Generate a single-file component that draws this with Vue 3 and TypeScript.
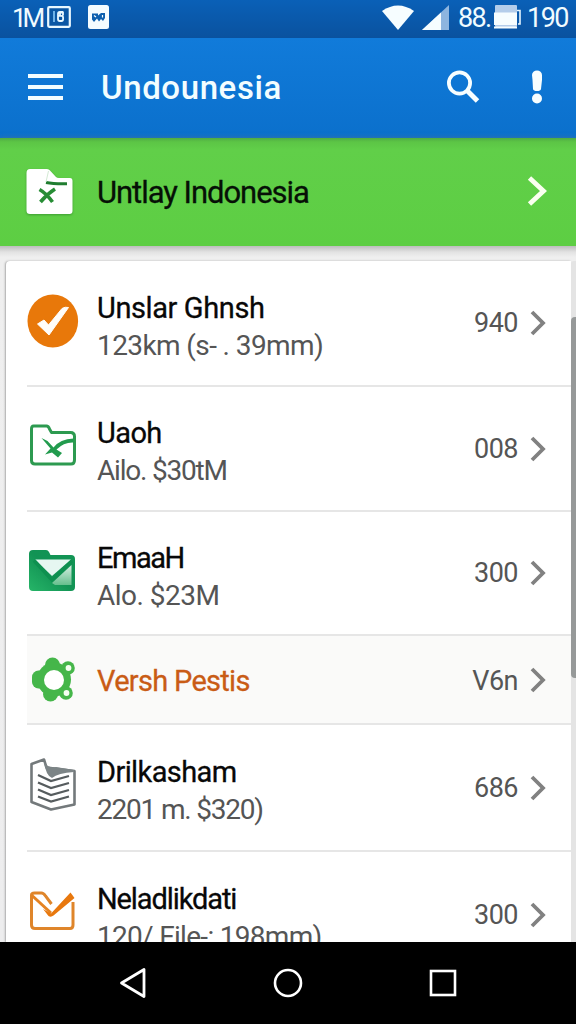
<script setup lang="ts">
interface Row {
  icon: 'check' | 'folder' | 'mail' | 'flower' | 'document' | 'envelope'
  title: string
  titleSpacing: number
  sub?: string
  subSpacing?: number
  value: string
  size: string
}

const rows: Row[] = [
  { icon: 'check', title: 'Unslar Ghnsh', titleSpacing: -0.4, sub: '123km (s- . 39mm)', subSpacing: -0.6, value: '940', size: 'first' },
  { icon: 'folder', title: 'Uaoh', titleSpacing: -0.6, sub: 'Ailo. $30tM', subSpacing: -1.2, value: '008', size: 'regular' },
  { icon: 'mail', title: 'EmaaH', titleSpacing: -1.5, sub: 'Alo. $23M', subSpacing: -0.5, value: '300', size: 'compact' },
  { icon: 'flower', title: 'Versh Pestis', titleSpacing: -0.7, value: 'V6n', size: 'active' },
  { icon: 'document', title: 'Drilkasham', titleSpacing: -0.6, sub: '2201 m. $320)', subSpacing: -1.2, value: '686', size: 'tall' },
  { icon: 'envelope', title: 'Neladlikdati', titleSpacing: -1.1, sub: '120/ File-: 198mm)', subSpacing: -0.7, value: '300', size: 'tall' },
]
</script>

<template>
  <div class="screen">
    <header class="status">
      <div class="status-left">
        <span class="carrier">1M</span>
        <svg class="window-icon" width="24" height="22" viewBox="0 0 24 22">
          <rect x="1.2" y="1.2" width="21.6" height="19.6" rx="1" fill="#0b57a4" stroke="#e9f8ff" stroke-width="2.2" />
          <path d="M7 5v11" stroke="#79bdf0" stroke-width="1.8" />
          <path d="M16 6h-3.200q-1.800 0-1.800 2v5q0 2 1.800 2h1.600q1.700 0 1.700-2v-1.300q0-1.800-1.700-1.800h-3M13 10V6.500h3v3" fill="none" stroke="#e9f8ff" stroke-width="1.800" />
        </svg>
        <svg class="app-icon" width="21" height="24" viewBox="0 0 21 24">
          <rect width="21" height="24" rx="2.5" fill="#f4fcff" />
          <path d="M4 8.500h6v2l3-2.500h4v5l-2 3-2-2-2 2.500-2-3-3 3.500-2-2.500z" fill="#0c5fae" />
          <path d="M6 10.500l2 1.500M14.500 10v2.500" stroke="#f4fcff" stroke-width="1.200" />
        </svg>
      </div>
      <div class="status-right">
        <svg width="32" height="25" viewBox="0 0 32 25"><path d="M0 6Q16-5 32 6L16 25z" fill="#f6fdff" /></svg>
        <svg class="signal" width="27" height="25" viewBox="0 0 27 25">
          <path d="M0 25L27 0v25z" fill="#8db5df" /><path d="M0 25L19 7.500V25z" fill="#f6fdff" />
        </svg>
        <span class="percent">88.</span>
        <svg class="battery" width="28" height="24" viewBox="0 0 28 24">
          <rect x="1" width="22" height="22" rx="1" fill="#b4cdea" />
          <path d="M0 7.500h23V20H0zM0 21.500h23v2H0z" fill="#f6fdff" />
          <path d="M23 5.500h3V19h-2" fill="none" stroke="#e4f5ff" stroke-width="1.600" />
        </svg>
        <span class="clock">190</span>
      </div>
    </header>

    <div class="appbar">
      <svg class="menu" width="35" height="26" viewBox="0 0 35 26"><path d="M0 2h35M0 13h35M0 24h35" stroke="#f3fdff" stroke-width="4" /></svg>
      <h1>Undounesia</h1>
      <svg class="search" width="34" height="34" viewBox="0 0 34 34">
        <circle cx="13.500" cy="13" r="10.600" fill="none" stroke="#f8feff" stroke-width="3.800" />
        <path d="M21 20.500L31.500 31" stroke="#f8feff" stroke-width="5" />
      </svg>
      <svg class="alert" width="12" height="34" viewBox="0 0 12 34">
        <path d="M1 5a5 4.500 0 0 1 10 0v5L10 19q-.5 2-4 2t-4-2L1.500 10z" fill="#f8feff" />
        <ellipse cx="6" cy="28.500" rx="5" ry="5" fill="#f8feff" />
      </svg>
    </div>

    <div class="banner">
      <svg class="banner-icon" width="47" height="46" viewBox="0 0 47 46">
        <path d="M4 0h17q2 0 3 1.500L30 8q1 1 3 1h11q2.500 0 2.500 3v30q0 3-3 3H4q-3.500 0-3.500-3.500V4Q.5 0 4 0z" fill="#fff" />
        <path d="M13.500 20.500q7 4 13 12.500M29 20q-8 5-14.500 13" fill="none" stroke="#278d35" stroke-width="3.600" />
        <path d="M20 13.500q8 1.500 21 1.200" fill="none" stroke="#207d30" stroke-width="3" /><path d="M22.500 2L20 13" stroke="#d3ead4" stroke-width="1" />
      </svg>
      <span class="banner-text">Untlay Indonesia</span>
      <svg class="banner-arrow" width="20" height="30" viewBox="0 0 20 30"><path d="M2.500 2L16.500 15 2.500 28" fill="none" stroke="#fafff0" stroke-width="4.800" /></svg>
    </div>

    <main class="content">
      <div class="card">
        <div v-for="row in rows" :key="row.title" class="row" :class="row.size">
          <div class="icon">
            <svg v-if="row.icon === 'check'" width="52" height="54" viewBox="0 0 52 54">
              <ellipse cx="25.800" cy="27" rx="25.300" ry="26.500" fill="#e8780a" />
              <path d="M10.500 30l6.500-4 4.500 5L35 14.500q3-2 6.500-1L22 41z" fill="#fffdfa" stroke="#fffdfa" />
            </svg>
            <svg v-else-if="row.icon === 'folder'" width="52" height="54" viewBox="0 0 52 54">
              <path d="M6.500 7h13q2 0 3 3l2 3.500h19q4 0 4 4V41q0 4-3.500 4H8q-3.500 0-3.500-3.500V10q0-3 2-3z" fill="#fff" stroke="#2d9a50" stroke-width="3" stroke-linejoin="round" />
              <path d="M14.500 19l6 3 6 6.500Q33 20 46.500 19.500v4Q37 23 29.500 30.500l5.500 3.500-4 4.500-6-5-7 2 5.500-6z" fill="#229b4e" />
            </svg>
            <svg v-else-if="row.icon === 'mail'" width="52" height="54" viewBox="0 0 52 54">
              <defs>
                <linearGradient id="fold" x1="0" y1="1" x2="1" y2="0"><stop offset="0" stop-color="#26b568" /><stop offset=".5" stop-color="#129354" /><stop offset="1" stop-color="#129555" /></linearGradient>
                <linearGradient id="flap" x1="0" y1="0" x2="0" y2="1"><stop offset="0" stop-color="#d8efe4" /><stop offset="1" stop-color="#66bf8d" /></linearGradient>
              </defs>
              <path d="M6 6h13q2 0 3 2l1.500 3H44q4 0 4 4v28q0 4-4 4H6q-4 0-4-4V10q0-4 4-4z" fill="url(#fold)" />
              <path d="M8 15.500h36L25 32z" fill="#e6f7f1" /><path d="M25 39L44.500 21v20H28z" fill="url(#flap)" />
              <path d="M7 16.500L25 36 45 17" fill="none" stroke="#0e9050" stroke-width="3.500" />
            </svg>
            <svg v-else-if="row.icon === 'flower'" width="52" height="54" viewBox="0 0 52 54">
              <g fill="#45b64a"><circle cx="25.500" cy="12" r="7.500" /><rect x="5" y="17.500" width="15" height="18" rx="6.500" /><circle cx="23.500" cy="41" r="7.500" /><circle cx="27" cy="26.500" r="17" /><circle cx="41" cy="15" r="6.800" /><circle cx="39" cy="40" r="6.800" /></g>
              <circle cx="27" cy="27" r="10" fill="#fff" /><circle cx="41.500" cy="15" r="2.900" fill="#f4fff1" /><circle cx="39.500" cy="40" r="2.900" fill="#f4fff1" />
            </svg>
            <svg v-else-if="row.icon === 'document'" width="52" height="54" viewBox="0 0 52 54">
              <path d="M4.500 6L17 1.500l2.500 8 28 3.500v33.500L24 51.500 4.500 44z" fill="#fff" stroke="#73797b" stroke-width="2.600" stroke-linejoin="round" />
              <path d="M17 4q4 6.500 12 5l18 3v2q-16 1-22 6-6-2-8-16z" fill="#7c8486" />
              <path d="M11 17l13 6 18-5M11 24.500l13 5.500 18-5M11 31.500l13 5.500 18-5M11 38.500l13 5 18-5" fill="none" stroke="#565c5e" stroke-width="2.300" />
            </svg>
            <svg v-else width="52" height="54" viewBox="0 0 52 54">
              <path d="M4.500 10q0-2 3-2h7q2 0 4 3l6 8M46 17v23q0 3.500-3 3.500H8q-3.500 0-3.500-3.500V10" fill="none" stroke="#df852a" stroke-width="3" />
              <path d="M5 10.500L24 28" fill="none" stroke="#e58322" stroke-width="3" />
              <path d="M16 24l8 4.500L43.500 7.500l4 5.500-21 17.500q-2.500 2-5 .5z" fill="#e8780e" />
            </svg>
          </div>
          <div class="copy">
            <div class="title" :style="{ letterSpacing: row.titleSpacing + 'px' }">{{ row.title }}</div>
            <div v-if="row.sub" class="sub" :style="{ letterSpacing: row.subSpacing + 'px' }">{{ row.sub }}</div>
          </div>
          <span class="value">{{ row.value }}</span>
          <svg class="arrow" width="16" height="26" viewBox="0 0 16 26"><path d="M2 2L13 13 2 24" fill="none" stroke="#818181" stroke-width="3.800" /></svg>
        </div>
      </div>
      <div class="track"><div class="thumb"></div></div>
    </main>

    <nav class="navbar">
      <svg width="28" height="32" viewBox="0 0 28 32"><path d="M25 2.500v27L2.500 16z" fill="none" stroke="#fff" stroke-width="2.800" stroke-linejoin="round" /></svg>
      <svg width="30" height="30" viewBox="0 0 30 30"><circle cx="15" cy="15" r="13" fill="none" stroke="#fff" stroke-width="2.600" /></svg>
      <svg width="28" height="28" viewBox="0 0 28 28"><rect x="2" y="2" width="24" height="24" fill="none" stroke="#fff" stroke-width="2.600" /></svg>
    </nav>
  </div>
</template>

<style>
body {
  margin: 0;
  overflow: hidden;
}
</style>

<style scoped>
.screen {
  width: 576px;
  height: 1024px;
  display: flex;
  flex-direction: column;
  overflow: hidden;
  background: #ededee;
  font-family: Roboto, "Liberation Sans", sans-serif;
}
svg {
  display: block;
  flex: none;
}
.status {
  height: 38px;
  flex: none;
  display: flex;
  justify-content: space-between;
  color: #f1fbff;
  background: linear-gradient(#0a60b7, #0a529f);
}
.status-left,
.status-right {
  display: flex;
  align-items: flex-start;
}
.carrier {
  width: 34px;
  margin-left: 12px;
  font-size: 26px;
  line-height: 37px;
  letter-spacing: -4px;
}
.window-icon {
  margin: 6px 0 0 1px;
}
.app-icon {
  margin: 5px 0 0 17px;
}
.status-right {
  padding-top: 5px;
}
.signal {
  margin-left: 8px;
}
.percent,
.clock {
  font-size: 27px;
  line-height: 38px;
  margin-top: -6px;
  white-space: nowrap;
}
.percent {
  width: 36px;
  margin-left: 9px;
  letter-spacing: -1.7px;
}
.clock {
  width: 49px;
  margin-left: 5px;
  letter-spacing: -1.5px;
}
.appbar {
  height: 100px;
  flex: none;
  display: flex;
  align-items: center;
  box-sizing: border-box;
  padding: 0 33px 3px 28px;
  background: linear-gradient(#117bda, #0b70cc);
}
.menu {
  margin-top: 1px;
}
h1 {
  margin: 2px auto 0 38px;
  color: #f3fdff;
  font-size: 33px;
  font-weight: 500;
  line-height: 40px;
  letter-spacing: 0.6px;
}
.search {
  margin-right: 51px;
}
.banner {
  height: 108px;
  flex: none;
  display: flex;
  align-items: center;
  box-sizing: border-box;
  padding: 0 29px 0 26px;
  background: linear-gradient(#4fab43 0, #5cc545 4px, #61cf49 12px, #5dce43 100%);
  box-shadow: 0 2px 6px #777;
}
.banner-icon {
  filter: drop-shadow(0 1px 1px #3d9c32);
}
.banner-text {
  margin: 2px auto 0 24px;
  font-size: 31px;
  line-height: 38px;
  letter-spacing: -1.05px;
  color: #061006;
  -webkit-text-stroke: 0.3px #061006;
}
.banner-arrow {
  margin-top: -2px;
}
.content {
  min-height: 0;
  flex: 1;
  display: flex;
  padding: 15px 0 0 6px;
  overflow: hidden;
  background: linear-gradient(#bdbdbd, #e2e2e2 6px, #efefef 11px, #ededee);
  z-index: 0;
}
.card {
  width: 565px;
  flex: none;
  border-radius: 4px 0 0;
  background: #fff;
  box-shadow: -1px 0 2px #aaa;
}
.row {
  display: flex;
  align-items: center;
  box-sizing: border-box;
  margin-left: 21px;
  border-bottom: 2px solid #e6e6e6;
}
.first {
  height: 126px;
}
.regular {
  height: 125px;
}
.compact {
  height: 124px;
}
.active {
  height: 89px;
  background: #fafaf9;
}
.tall {
  height: 127px;
}
.icon {
  width: 52px;
  margin-top: -5px;
}
.active .icon {
  margin-top: 0;
}
.copy {
  flex: 1;
  margin: 7px 0 0 18px;
  white-space: nowrap;
}
.active .copy {
  margin-top: 2px;
}
.title {
  color: #080808;
  font-size: 29px;
  line-height: 38px;
  -webkit-text-stroke: 0.3px currentColor;
}
.active .title {
  color: #c95c16;
}
.sub {
  color: #555;
  font-size: 28px;
  line-height: 38px;
}
.value {
  color: #555;
  font-size: 27px;
  letter-spacing: -0.5px;
}
.active .value {
  margin-top: 2px;
}
.arrow {
  margin: 0 25px 0 12px;
}
.track {
  width: 5px;
  background: #e4e4e4;
  border-radius: 3px 0 0;
}
.thumb {
  height: 361px;
  margin-top: 56px;
  border-radius: 4px 0 0 4px;
  background: #969999;
}
.navbar {
  height: 82px;
  flex: none;
  display: flex;
  align-items: center;
  justify-content: space-between;
  box-sizing: border-box;
  padding: 0 119px;
  background: #000;
}
</style>
